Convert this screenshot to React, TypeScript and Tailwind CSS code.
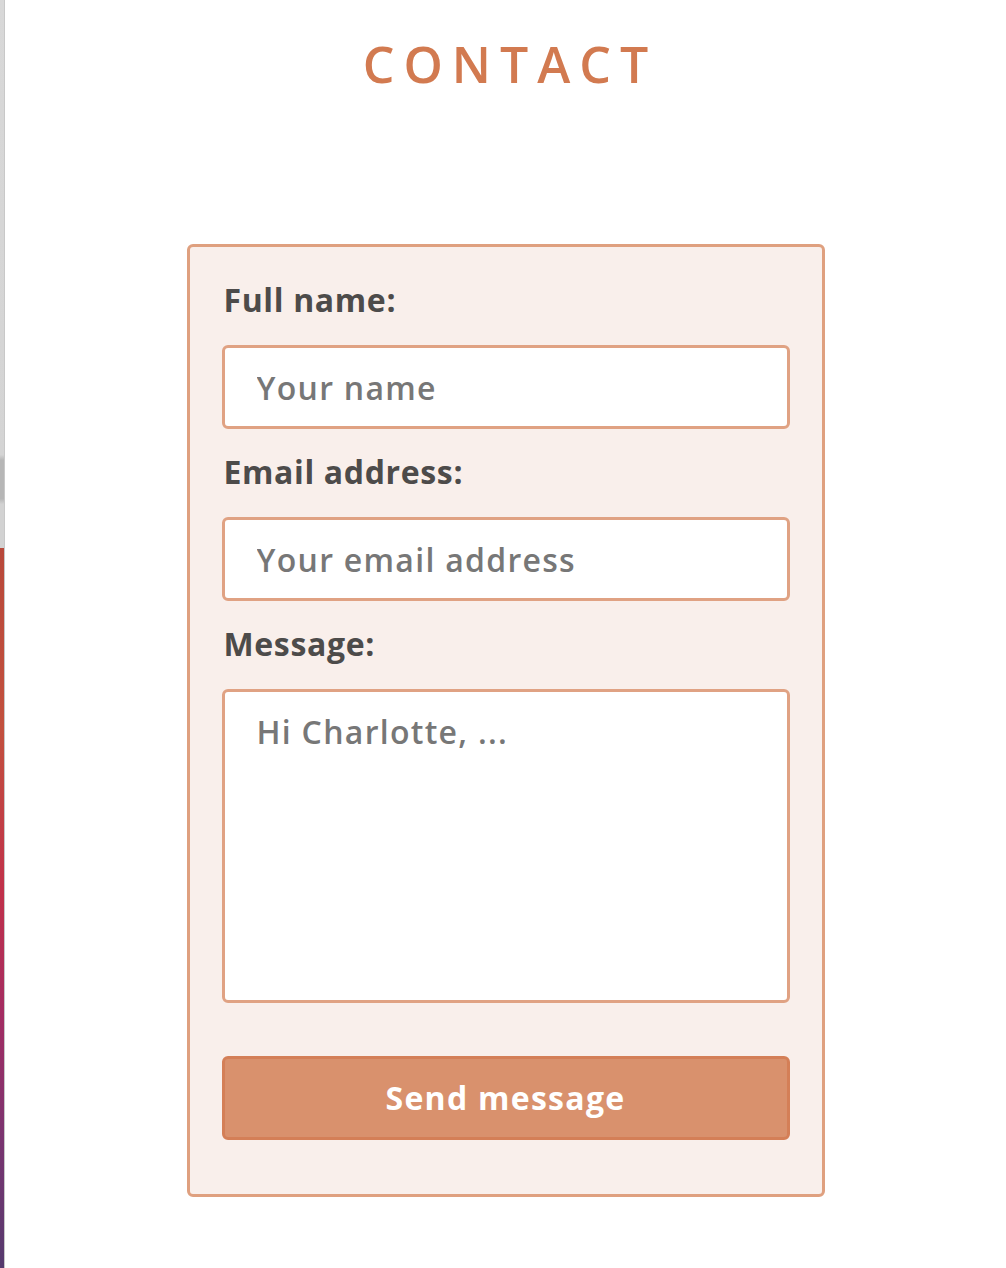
import { useState } from "react";

const font = { fontFamily: '"Open Sans", "Liberation Sans", sans-serif' };

function Field({ label, children }: { label: string; children: React.ReactNode }) {
  return (
    <div className="flex flex-col">
      <label className="pl-[2px] text-[32px] leading-[40px] font-bold tracking-[0.02em] text-[#4d4b4a]">{label}</label>
      <div className="mt-[25px]">{children}</div>
    </div>
  );
}

export default function App() {
  const [name, setName] = useState("");
  const [email, setEmail] = useState("");
  const [msg, setMsg] = useState("");

  const inputCls =
    "block w-full h-[84px] rounded-[6px] border-[3px] border-[#e0a283] bg-white px-[32px] text-[32px] font-semibold tracking-[0.04em] text-[#555] placeholder:text-[#777] outline-none";

  return (
    <div className="flex min-h-[1268px] w-full bg-white" style={font}>
      <div className="w-[5px] shrink-0 border-r border-[#c8c8c8] flex flex-col">
        <div className="h-[548px] bg-[linear-gradient(to_bottom,#d8d8d8_0%,#d4d4d4_83%,#b6b6b6_84%,#b6b6b6_91%,#d2d2d2_92%)]" />
        <div className="flex-1 bg-[linear-gradient(to_bottom,#b8483a_0%,#c2503e_25%,#c0304a_48%,#a32c62_65%,#7a3470_82%,#553a6e_100%)]" />
      </div>

      <div className="flex-1 flex flex-col items-center">
        <h1 className="mt-[33px] text-[50px] leading-[62px] font-semibold tracking-[0.18em] pl-[0.18em] text-[#d27a50]">
          CONTACT
        </h1>

        <form
          className="mt-[149px] w-[638px] rounded-[6px] border-[3px] border-[#dfa07f] bg-[#f9efeb] px-[32px] pt-[33px] pb-[54px] flex flex-col gap-[23px]"
          onSubmit={(e) => e.preventDefault()}
        >
          <Field label="Full name:">
            <input className={inputCls} placeholder="Your name" value={name} onChange={(e) => setName(e.target.value)} />
          </Field>
          <Field label="Email address:">
            <input className={inputCls} placeholder="Your email address" value={email} onChange={(e) => setEmail(e.target.value)} />
          </Field>
          <Field label="Message:">
            <textarea
              className="block w-full h-[314px] resize-none rounded-[6px] border-[3px] border-[#e0a283] bg-white px-[32px] py-[20px] text-[32px] leading-[40px] font-semibold tracking-[0.04em] text-[#555] placeholder:text-[#777] outline-none"
              placeholder="Hi Charlotte, ..."
              value={msg}
              onChange={(e) => setMsg(e.target.value)}
            />
          </Field>

          <button
            type="submit"
            className="mt-[30px] h-[84px] w-full rounded-[6px] border-[3px] border-[#d47f57] bg-[#d9916d] text-[32px] font-bold tracking-[0.04em] text-white"
          >
            Send message
          </button>
        </form>
      </div>
    </div>
  );
}
